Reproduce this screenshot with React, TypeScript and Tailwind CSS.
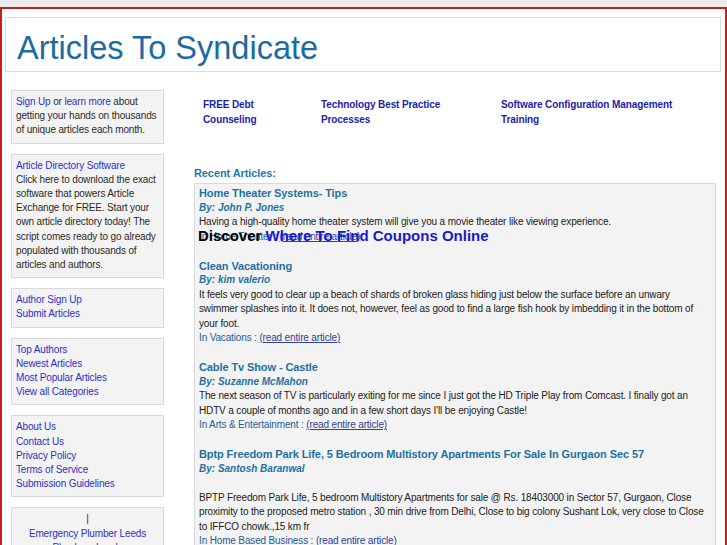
import * as React from 'react';

const sideLink = 'text-[#2f2fcc]';

function SideBox({ children, center }: { children: React.ReactNode; center?: boolean }) {
  return (
    <div
      className={`border border-[#d9d9d9] bg-[#f3f3f3] px-[4px] pt-[4px] pb-[5px] text-[10px] leading-[14.2px] tracking-[-0.15px] text-[#2b2b2b] ${
        center ? 'text-center' : ''
      }`}
    >
      {children}
    </div>
  );
}

type Article = {
  title: string;
  author: string;
  lines: string[];
  category: string;
  blank?: boolean;
};

const articles: Article[] = [
  {
    title: 'Home Theater Systems- Tips',
    author: 'By: John P. Jones',
    lines: ['Having a high-quality home theater system will give you a movie theater like viewing experience.'],
    category: 'In Home Theater : ',
  },
  {
    title: 'Clean Vacationing',
    author: 'By: kim valerio',
    lines: [
      'It feels very good to clear up a beach of shards of broken glass hiding just below the surface before an unwary',
      'swimmer splashes into it. It does not, however, feel as good to find a large fish hook by imbedding it in the bottom of',
      'your foot.',
    ],
    category: 'In Vacations : ',
  },
  {
    title: 'Cable Tv Show - Castle',
    author: 'By: Suzanne McMahon',
    lines: [
      'The next season of TV is particularly exiting for me since I just got the HD Triple Play from Comcast. I finally got an',
      "HDTV a couple of months ago and in a few short days I'll be enjoying Castle!",
    ],
    category: 'In Arts & Entertainment : ',
  },
  {
    title: 'Bptp Freedom Park Life, 5 Bedroom Multistory Apartments For Sale In Gurgaon Sec 57',
    author: 'By: Santosh Baranwal',
    blank: true,
    lines: [
      'BPTP Freedom Park Life, 5 bedroom Multistory Apartments for sale @ Rs. 18403000 in Sector 57, Gurgaon, Close',
      'proximity to the proposed metro station , 30 min drive from Delhi, Close to big colony Sushant Lok, very close to Close',
      'to IFFCO chowk.,15 km fr',
    ],
    category: 'In Home Based Business : ',
  },
];

export default function App() {
  return (
    <div className="h-[545px] overflow-hidden bg-[#ececec] pt-[7px] font-['Liberation_Sans',Arial,sans-serif]">
      <div className="h-[560px] border-2 border-[#c81e1e] bg-white">
        {/* header */}
        <div className="ml-[3px] mr-[4px] mt-[8px] border border-[#dcdcdc] pl-[11px] pt-[12px] pb-[4px]">
          <h1 className="text-[32.5px] leading-[37px] font-normal text-[#1a6ca0]">Articles To Syndicate</h1>
        </div>

        <div className="mt-[18px] flex pl-[9px]">
          {/* sidebar */}
          <div className="flex w-[153px] shrink-0 flex-col gap-[10px]">
            <SideBox>
              <span className={sideLink}>Sign Up</span> or <span className={sideLink}>learn more</span> about
              <br />
              getting your hands on thousands
              <br />
              of unique articles each month.
            </SideBox>
            <SideBox>
              <span className={sideLink}>Article Directory Software</span>
              <br />
              Click here to download the exact
              <br />
              software that powers Article
              <br />
              Exchange for FREE. Start your
              <br />
              own article directory today! The
              <br />
              script comes ready to go already
              <br />
              populated with thousands of
              <br />
              articles and authors.
            </SideBox>
            <SideBox>
              <div className={sideLink}>Author Sign Up</div>
              <div className={sideLink}>Submit Articles</div>
            </SideBox>
            <SideBox>
              <div className={sideLink}>Top Authors</div>
              <div className={sideLink}>Newest Articles</div>
              <div className={sideLink}>Most Popular Articles</div>
              <div className={sideLink}>View all Categories</div>
            </SideBox>
            <SideBox>
              <div className={sideLink}>About Us</div>
              <div className={sideLink}>Contact Us</div>
              <div className={sideLink}>Privacy Policy</div>
              <div className={sideLink}>Terms of Service</div>
              <div className={sideLink}>Submission Guidelines</div>
            </SideBox>
            <SideBox center>
              <div>|</div>
              <div className={sideLink}>Emergency Plumber Leeds</div>
              <div className={sideLink}>Plumbers Leeds</div>
            </SideBox>
          </div>

          {/* main column */}
          <div className="ml-[30px] w-[522px] shrink-0">
            <div className="mt-[8px] grid grid-cols-[118px_180px_1fr] pl-[9px] text-[10px] font-bold leading-[14.5px] tracking-[-0.1px] text-[#2222aa]">
              <div>
                FREE Debt
                <br />
                Counseling
              </div>
              <div>
                Technology Best Practice
                <br />
                Processes
              </div>
              <div>
                Software Configuration Management
                <br />
                Training
              </div>
            </div>

            <div className="mt-[39px] mb-[3px] text-[11px] font-bold leading-[14px] tracking-[-0.1px] text-[#2479a8]">
              Recent Articles:
            </div>

            <div className="border border-[#d9d9d9] bg-[#f3f3f3] px-[4px] pt-[2px] pb-[10px]">
              {articles.map((a, i) => (
                <div key={i} className={`relative ${i > 0 ? 'mt-[14.5px]' : ''}`}>
                  <div className="text-[11px] font-bold leading-[14.5px] tracking-[-0.1px] text-[#1d72a3]">{a.title}</div>
                  <div className="text-[10px] font-bold italic leading-[14.5px] text-[#1d72a3]">{a.author}</div>
                  <div className="text-[10px] leading-[14.5px] tracking-[-0.15px] text-[#222]">
                    {a.blank && <div className="h-[14.5px]" />}
                    {a.lines.map((l, j) => (
                      <div key={j} className="whitespace-nowrap">
                        {l}
                      </div>
                    ))}
                    <div className="text-[#2a5c96]">
                      {a.category}
                      <span className="text-[#34409a] underline">(read entire article)</span>
                    </div>
                  </div>
                  {i === 0 && (
                    <div className="absolute left-[-1px] top-[41px] whitespace-nowrap text-[15px] font-bold leading-[17px]">
                      <span className="text-black">Discover</span>{' '}
                      <span className="text-[#1a1acc]">Where To Find Coupons Online</span>
                    </div>
                  )}
                </div>
              ))}
            </div>
          </div>
        </div>
      </div>
    </div>
  );
}
